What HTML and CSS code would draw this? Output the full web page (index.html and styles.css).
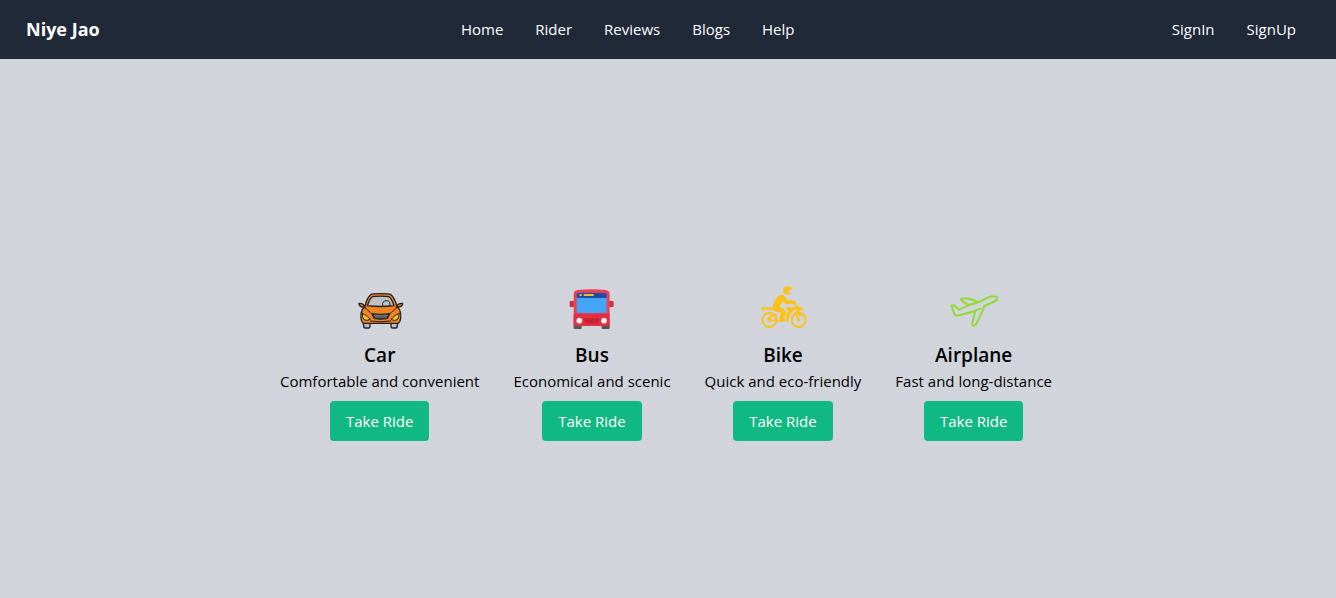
FILE: index.html
```html
<!DOCTYPE html>
<html lang="en">
<head>
<meta charset="utf-8">
<meta name="viewport" content="width=device-width, initial-scale=1">
<title>Niye Jao</title>
<link rel="stylesheet" href="styles.css">
</head>
<body>
<header class="navbar">
  <a class="brand" href="#">Niye Jao</a>
  <nav class="links" aria-label="Main">
    <a href="#">Home</a>
    <a href="#">Rider</a>
    <a href="#">Reviews</a>
    <a href="#">Blogs</a>
    <a href="#">Help</a>
  </nav>
  <nav class="links" aria-label="Account">
    <a href="#">SignIn</a>
    <a href="#">SignUp</a>
  </nav>
</header>
<main class="hero">
  <section class="ride">
    <svg class="icon" viewBox="13 15 144 144" aria-hidden="true">
      <g stroke="#1f2225" stroke-width="4" stroke-linejoin="round" stroke-linecap="round">
        <path fill="#b9bec4" d="M34 124h21v13q0 7-5 7H41q-5 0-5-7zM118 124h21l-2 13q0 7-5 7h-9q-5 0-5-7z"/>
        <path fill="#f58220" d="M40 78q6-25 17-34 5-3 30-3t31 3q10 8 18 34l8 12q5 9 3 24-1 13-8 16H36q-7-3-8-16-2-15 4-25z"/>
        <path fill="#bfc0c2" d="M47 77q7-21 15-27 25-3 50 0 9 7 15 27-40 5-80 0z"/>
        <path fill="none" stroke-width="3" d="M93 76q-3-12 10-14 12-1 12 11l-3 5"/>
        <path fill="#f58220" d="M40 81q-4-12-18-11 0 10 11 11zM134 81q4-12 19-11 0 10-12 11z"/>
        <path fill="none" stroke-width="3" d="M39 82q10 9 19 17M137 82q-10 9-20 17"/>
        <path fill="#43484b" d="M61 101q26 4 53 0l-7 14q-20 4-39 0z"/>
        <path fill="none" stroke="#92988f" stroke-width="2" d="M68 106h39M70 111h35"/>
        <path fill="#fcc21b" stroke-width="3" d="M32 100q12 4 24 18-10 6-19 1-6-6-5-19zM142 100q-12 4-24 18 10 6 19 1 6-6 5-19z"/>
        <path fill="none" stroke-width="3" d="M56 123q31 5 61 0"/>
      </g>
    </svg>
    <h2>Car</h2>
    <p>Comfortable and convenient</p>
    <button type="button">Take Ride</button>
  </section>
  <section class="ride">
    <svg class="icon" viewBox="19 15 144 144" aria-hidden="true">
      <path fill="#50575d" d="M36 132h24v12q0 3-3 3H39q-3 0-3-3zM120 132h24v12q0 3-3 3h-18q-3 0-3-3z"/>
      <path fill="#d42f46" d="M27 63h12v18H27q-3 0-3-3V66q0-3 3-3zM141 63h12q3 0 3 3v12q0 3-3 3h-12z"/>
      <path fill="#ed4054" d="M36 42q0-10 12-12 42-5 84 0 12 2 12 12v96H36z"/>
      <path fill="#e32f44" d="M36 101h108v37H36z"/>
      <path fill="#1b4ea9" d="M45 42q0-3 5-3h80q5 0 5 3v12H45z"/>
      <path fill="#42a5f5" d="M45 54h90v42q0 3-3 3H48q-3 0-3-3z"/>
      <path fill="#eebd35" d="M54 42h6v6h-6zM66 42h30v6H66z"/>
      <path fill="#c42531" d="M68 114h44v8q-2 8-8 8H76q-6 0-8-8z"/>
      <circle cx="53" cy="122" r="9" fill="#f9b9bd"/><circle cx="127" cy="122" r="9" fill="#f9b9bd"/>
      <circle cx="53" cy="122" r="7" fill="#fff"/><circle cx="127" cy="122" r="7" fill="#fff"/>
    </svg>
    <h2>Bus</h2>
    <p>Economical and scenic</p>
    <button type="button">Take Ride</button>
  </section>
  <section class="ride">
    <svg class="icon" viewBox="16 15 144 144" aria-hidden="true">
      <g fill="#fcc21b">
        <path d="M117 28q-5-10-16-10-13 1-13 13 1 13 14 13 8 0 13-5l-9-2q-4-3-1-7z"/>
        <path d="M78 45q5-3 11 0 8 5 11 15l22 2q6 1 6 6-1 5-7 5l-25-1-9-8-9 16 15 9q5 4 4 10l-5 22q-1 5-9 5-6-1-6-7l4-20-18-7q-7-4-4-12-4-1 0-7 7-20 19-28z"/>
        <path d="M23 82h38l12 8-3 5q-26-11-45-3l-2-3zM97 82h30l-4-8 8-1 5 9h9q4 0 4 4t-5 5l-8 1 7 15-5 3-14-23-13 14q-8 12-6 23H80v-6h18q-2-18 6-28h-7z"/>
      </g>
      <g fill="none" stroke="#fcc21b" stroke-width="6">
        <circle cx="47" cy="120" r="21"/><circle cx="135" cy="120" r="21"/>
        <path d="M47 120q-4-12 10-13l12-4M47 120l25 1 7 3M135 120l-10-24"/>
      </g>
      <g fill="#fcc21b"><circle cx="47" cy="120" r="6"/><circle cx="135" cy="120" r="5"/></g>
    </svg>
    <h2>Bike</h2>
    <p>Quick and eco-friendly</p>
    <button type="button">Take Ride</button>
  </section>
  <section class="ride">
    <svg class="icon" viewBox="16 15 144 144" aria-hidden="true">
      <path fill="none" stroke="#91da32" stroke-width="6" stroke-linejoin="round" stroke-linecap="round" d="M20 77q9-3 14 4l8 8 30-13-20-14q-8-6 4-7 16-1 30 5l15 7 32-16q12-5 24 0 7 4-4 12-14 7-34 15-6 18-17 39-8 20-16 21-5 0-1-17 3-15 7-28l-41 11q-16 5-20 0-6-9-11-27zM73 75l29-9M91 92l16-6"/>
    </svg>
    <h2>Airplane</h2>
    <p>Fast and long-distance</p>
    <button type="button">Take Ride</button>
  </section>
</main>
</body>
</html>
```
FILE: styles.css
```css
* {
  box-sizing: border-box;
}

body {
  display: flex;
  flex-direction: column;
  min-height: 100vh;
  margin: 0;
  background: #d1d5db;
  color: #000;
  font-family: "Open Sans", "Noto Sans", sans-serif;
  font-size: 15px;
  line-height: 24px;
}

.navbar {
  display: flex;
  flex-wrap: wrap;
  align-items: center;
  justify-content: space-between;
  min-height: 59px;
  padding: 8px 24px 10px 26px;
  background: #1f2937;
  color: #fff;
}

.navbar a {
  color: inherit;
  text-decoration: none;
}

.brand {
  font-size: 18px;
  font-weight: 700;
}

.links {
  display: flex;
  flex-wrap: wrap;
}

.links a {
  padding: 8px 16px;
}

.hero {
  display: flex;
  flex: 1;
  flex-wrap: wrap;
  align-items: center;
  align-content: center;
  justify-content: center;
  gap: 34px;
  padding: 68px 4px 0 0;
}

.ride {
  display: flex;
  flex-direction: column;
  align-items: center;
}

.icon {
  width: 48px;
  height: 48px;
  margin-bottom: 8px;
}

.ride h2 {
  margin: 0;
  font-size: 19px;
  font-weight: 600;
  line-height: 28px;
}

.ride p {
  margin: 0 0 8px;
}

.ride button {
  padding: 8px 16px;
  border: 0;
  border-radius: 4px;
  background: #10b981;
  color: #fff;
  font: inherit;
  cursor: pointer;
}
```
